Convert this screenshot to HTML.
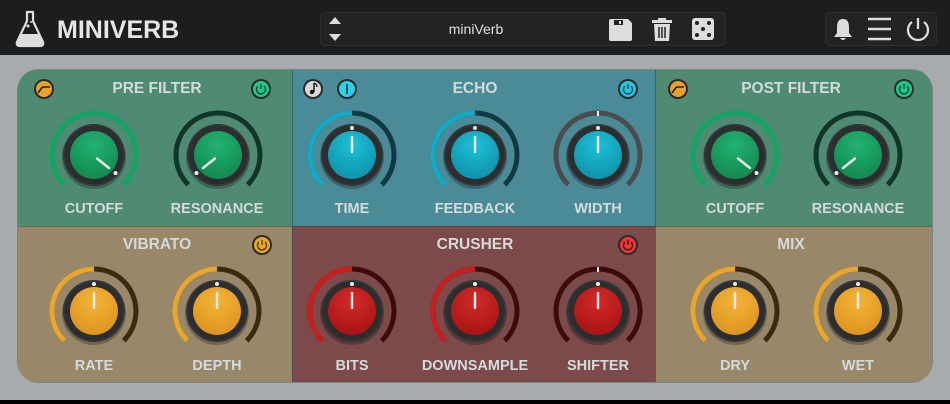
<!DOCTYPE html>
<html><head><meta charset="utf-8"><style>
html,body{margin:0;padding:0;width:950px;height:404px;overflow:hidden;background:#000;font-family:"Liberation Sans",sans-serif}
#hdr{position:absolute;left:0;top:0;width:950px;height:55px;background:#1c1d1f}
#bg{position:absolute;left:0;top:55px;width:950px;height:345px;background:#a7abae}
.t{position:absolute;font-weight:bold;color:#d3dbdb;font-size:14.5px;text-align:center;width:160px;margin-left:-80px}
.h{font-size:15.5px}
</style></head><body>
<div id="hdr"></div>
<div id="bg"></div>
<svg width="950" height="404" style="position:absolute;left:0;top:0">
<defs>
<radialGradient id="gG" cx="50%" cy="30%" r="70%"><stop offset="0" stop-color="#22b374"/><stop offset="1" stop-color="#13894f"/></radialGradient>
<radialGradient id="gT" cx="50%" cy="30%" r="70%"><stop offset="0" stop-color="#1ec0d8"/><stop offset="1" stop-color="#0e93ab"/></radialGradient>
<radialGradient id="gA" cx="50%" cy="30%" r="70%"><stop offset="0" stop-color="#f4b43a"/><stop offset="1" stop-color="#dc9420"/></radialGradient>
<radialGradient id="gR" cx="50%" cy="30%" r="70%"><stop offset="0" stop-color="#d42a2a"/><stop offset="1" stop-color="#a81414"/></radialGradient>
<g id="body"><circle r="32" fill="#000" opacity=".25" cy="2"/><circle r="31" fill="#2c2d2f"/><circle r="30" fill="none" stroke="#3a3b3d" stroke-width="1"/></g>
</defs>
<!-- header -->
<g fill="none" stroke="#ddd" stroke-width="2.2">
<path d="M26 12 h8 M27 12 v9 L17 42 q-1 4 3 4 h20 q4 0 3-4 L33 21 v-9"/>
</g>
<path d="M20 34 h20 l3 8 q1 3-3 3 h-20 q-4 0-3-3z" fill="#ddd"/>
<circle cx="28" cy="26" r="1.5" fill="#ddd"/><circle cx="31" cy="22" r="1" fill="#ddd"/>
<text x="57" y="38" font-family="Liberation Sans" font-weight="bold" font-size="25" fill="#e6e6e6">MINIVERB</text>
<rect x="320.5" y="12.5" width="405" height="33" rx="4" fill="#222325" stroke="#2e2f31"/>
<path d="M329 24 l6-7 l6 7z M329 34 l6 7 l6-7z" fill="#ddd"/>
<text x="476" y="34" text-anchor="middle" font-family="Liberation Sans" font-size="14" fill="#e0e0e0">miniVerb</text>
<path d="M611 19 h17 l4 4 v16 q0 2-2 2 h-19 q-2 0-2-2 v-18 q0-2 2-2z" fill="#ddd"/><rect x="614" y="20" width="9" height="5" fill="#222"/><rect x="619" y="21" width="2" height="3" fill="#ddd"/>
<path d="M652 20 h20 v3 h-20z M658 18 h8 v2 h-8z M654 24 h16 l-1 17 h-14z" fill="#ddd"/><path d="M659 27 v11 M662 27 v11 M665 27 v11" stroke="#222" stroke-width="1.5"/>
<rect x="692" y="18" width="22" height="22" rx="3" fill="#ddd"/>
<g fill="#222"><circle cx="697" cy="23" r="2"/><circle cx="709" cy="23" r="2"/><circle cx="703" cy="29" r="2"/><circle cx="697" cy="35" r="2"/><circle cx="709" cy="35" r="2"/></g>
<rect x="825.5" y="12.5" width="111" height="33" rx="4" fill="#222325" stroke="#2e2f31"/>
<path d="M843 19 q-6 0-6 8 v6 l-3 4 h18 l-3-4 v-6 q0-8-6-8z M840 38 q3 4 6 0z" fill="#ddd"/>
<path d="M868 19 h23 M868 29 h23 M868 39 h23" stroke="#ddd" stroke-width="2.4"/>
<path d="M912 22 a10 10 0 1 0 12 0 M918 18 v11" fill="none" stroke="#ddd" stroke-width="2.3"/>
<!-- panel -->
<rect x="17" y="69" width="916" height="314" rx="22" fill="#5f6a64" opacity=".6"/>
<path d="M40 70 H292 V226 H18 V92 Q18 70 40 70z" fill="#4f8a73"/>
<rect x="292" y="70" width="363" height="156" fill="#4b8b98"/>
<path d="M655 70 H910 Q932 70 932 92 V226 H655z" fill="#4f8a73"/>
<path d="M18 226 H292 V382 H40 Q18 382 18 360z" fill="#988769"/>
<rect x="292" y="226" width="363" height="156" fill="#7c4a4a"/>
<path d="M655 226 H932 V360 Q932 382 910 382 H655z" fill="#988769"/>
<path d="M292.5 70 V382 M655.5 70 V382" stroke="#2d4a48" stroke-width="1" opacity=".6"/>
<path d="M18 226.5 H932" stroke="#2d3a38" stroke-width="1" opacity=".4"/>
<!-- small buttons -->
<g><circle cx="44" cy="89" r="10" fill="#2a2a2a"/><circle cx="44" cy="89" r="8" fill="#e8a030"/><path d="M38 93 l3-4 q1-2 3-2 h6" fill="none" stroke="#222" stroke-width="1.6"/></g>
<g><circle cx="678" cy="89" r="10" fill="#2a2a2a"/><circle cx="678" cy="89" r="8" fill="#e8a030"/><path d="M672 93 l3-4 q1-2 3-2 h6" fill="none" stroke="#222" stroke-width="1.6"/></g>
<g><circle cx="261" cy="89" r="10" fill="#2a2a2a"/><circle cx="261" cy="89" r="8" fill="#1ec98a"/><path d="M258 86 a4.5 4.5 0 1 0 6 0 M261 84 v5" fill="none" stroke="#1b4a38" stroke-width="1.4"/></g>
<g><circle cx="904" cy="89" r="10" fill="#2a2a2a"/><circle cx="904" cy="89" r="8" fill="#1ec98a"/><path d="M901 86 a4.5 4.5 0 1 0 6 0 M904 84 v5" fill="none" stroke="#1b4a38" stroke-width="1.4"/></g>
<g><circle cx="628" cy="89" r="10" fill="#2a2a2a"/><circle cx="628" cy="89" r="8" fill="#25c8e0"/><path d="M625 86 a4.5 4.5 0 1 0 6 0 M628 84 v5" fill="none" stroke="#14505a" stroke-width="1.4"/></g>
<g><circle cx="262" cy="245" r="10" fill="#2a2a2a"/><circle cx="262" cy="245" r="8" fill="#e8a828"/><path d="M259 242 a4.5 4.5 0 1 0 6 0 M262 240 v5" fill="none" stroke="#5a3a08" stroke-width="1.4"/></g>
<g><circle cx="628" cy="245" r="10" fill="#2a2a2a"/><circle cx="628" cy="245" r="8" fill="#e83838"/><path d="M625 242 a4.5 4.5 0 1 0 6 0 M628 240 v5" fill="none" stroke="#5a1010" stroke-width="1.4"/></g>
<g><circle cx="313" cy="89" r="10" fill="#2a2a2a"/><circle cx="313" cy="89" r="8" fill="#d8d8d8"/><path d="M314 83 v9" stroke="#111" stroke-width="1.4"/><circle cx="312" cy="92" r="2.2" fill="#111"/><path d="M314 83 q3 1 3 4" fill="none" stroke="#111" stroke-width="1.2"/></g>
<g><circle cx="347" cy="89" r="10" fill="#2a2a2a"/><circle cx="347" cy="89" r="8" fill="#2ad0ec"/><path d="M347 84 v10" stroke="#0d3a44" stroke-width="1.8"/></g>

<g transform="translate(94,155)"><path d="M-29.7 29.7 A42 42 0 1 1 29.7 29.7" fill="none" stroke="#14a466" stroke-width="5"/><use href="#body"/><circle r="24" fill="url(#gG)"/><path d="M3 3.5 L15 13" stroke="#eee" stroke-width="2.4" stroke-linecap="round"/><circle cx="21.5" cy="18" r="2" fill="#eee"/></g>
<g transform="translate(218,155)"><path d="M-29.7 29.7 A42 42 0 1 1 29.7 29.7" fill="none" stroke="#12352a" stroke-width="5"/><use href="#body"/><circle r="24" fill="url(#gG)"/><path d="M-3 3.5 L-15 13" stroke="#eee" stroke-width="2.4" stroke-linecap="round"/><circle cx="-21.5" cy="18" r="2" fill="#eee"/></g>
<g transform="translate(735,155)"><path d="M-29.7 29.7 A42 42 0 1 1 29.7 29.7" fill="none" stroke="#14a466" stroke-width="5"/><use href="#body"/><circle r="24" fill="url(#gG)"/><path d="M3 3.5 L15 13" stroke="#eee" stroke-width="2.4" stroke-linecap="round"/><circle cx="21.5" cy="18" r="2" fill="#eee"/></g>
<g transform="translate(858,155)"><path d="M-29.7 29.7 A42 42 0 1 1 29.7 29.7" fill="none" stroke="#12352a" stroke-width="5"/><use href="#body"/><circle r="24" fill="url(#gG)"/><path d="M-3 3.5 L-15 13" stroke="#eee" stroke-width="2.4" stroke-linecap="round"/><circle cx="-21.5" cy="18" r="2" fill="#eee"/></g>
<g transform="translate(352,155)"><path d="M-29.7 29.7 A42 42 0 1 1 29.7 29.7" fill="none" stroke="#0f3a42" stroke-width="5"/><path d="M-29.7 29.7 A42 42 0 0 1 0 -42" fill="none" stroke="#14aac4" stroke-width="5"/><use href="#body"/><circle r="24" fill="url(#gT)"/><path d="M0 -3 V-18" stroke="#eee" stroke-width="2.4" stroke-linecap="round"/><circle cy="-27" r="2" fill="#eee"/></g>
<g transform="translate(475,155)"><path d="M-29.7 29.7 A42 42 0 1 1 29.7 29.7" fill="none" stroke="#0f3a42" stroke-width="5"/><path d="M-29.7 29.7 A42 42 0 0 1 0 -42" fill="none" stroke="#14aac4" stroke-width="5"/><use href="#body"/><circle r="24" fill="url(#gT)"/><path d="M0 -3 V-18" stroke="#eee" stroke-width="2.4" stroke-linecap="round"/><circle cy="-27" r="2" fill="#eee"/></g>
<g transform="translate(598,155)"><path d="M-29.7 29.7 A42 42 0 1 1 29.7 29.7" fill="none" stroke="#4a4c4e" stroke-width="5"/><path d="M0 -44 V-39" stroke="#eee" stroke-width="2"/><use href="#body"/><circle r="24" fill="url(#gT)"/><path d="M0 -3 V-18" stroke="#eee" stroke-width="2.4" stroke-linecap="round"/><circle cy="-27" r="2" fill="#eee"/></g>
<g transform="translate(94,311)"><path d="M-29.7 29.7 A42 42 0 1 1 29.7 29.7" fill="none" stroke="#3a2a10" stroke-width="5"/><path d="M-29.7 29.7 A42 42 0 0 1 0 -42" fill="none" stroke="#eaa62c" stroke-width="5"/><use href="#body"/><circle r="24" fill="url(#gA)"/><path d="M0 -3 V-18" stroke="#eee" stroke-width="2.4" stroke-linecap="round"/><circle cy="-27" r="2" fill="#eee"/></g>
<g transform="translate(217,311)"><path d="M-29.7 29.7 A42 42 0 1 1 29.7 29.7" fill="none" stroke="#3a2a10" stroke-width="5"/><path d="M-29.7 29.7 A42 42 0 0 1 0 -42" fill="none" stroke="#eaa62c" stroke-width="5"/><use href="#body"/><circle r="24" fill="url(#gA)"/><path d="M0 -3 V-18" stroke="#eee" stroke-width="2.4" stroke-linecap="round"/><circle cy="-27" r="2" fill="#eee"/></g>
<g transform="translate(352,311)"><path d="M-29.7 29.7 A42 42 0 1 1 29.7 29.7" fill="none" stroke="#3a0c0c" stroke-width="5"/><path d="M-29.7 29.7 A42 42 0 0 1 0 -42" fill="none" stroke="#c81e1e" stroke-width="5"/><use href="#body"/><circle r="24" fill="url(#gR)"/><path d="M0 -3 V-18" stroke="#eee" stroke-width="2.4" stroke-linecap="round"/><circle cy="-27" r="2" fill="#eee"/></g>
<g transform="translate(475,311)"><path d="M-29.7 29.7 A42 42 0 1 1 29.7 29.7" fill="none" stroke="#3a0c0c" stroke-width="5"/><path d="M-29.7 29.7 A42 42 0 0 1 0 -42" fill="none" stroke="#c81e1e" stroke-width="5"/><use href="#body"/><circle r="24" fill="url(#gR)"/><path d="M0 -3 V-18" stroke="#eee" stroke-width="2.4" stroke-linecap="round"/><circle cy="-27" r="2" fill="#eee"/></g>
<g transform="translate(598,311)"><path d="M-29.7 29.7 A42 42 0 1 1 29.7 29.7" fill="none" stroke="#3a0c0c" stroke-width="5"/><path d="M0 -44 V-39" stroke="#eee" stroke-width="2"/><use href="#body"/><circle r="24" fill="url(#gR)"/><path d="M0 -3 V-18" stroke="#eee" stroke-width="2.4" stroke-linecap="round"/><circle cy="-27" r="2" fill="#eee"/></g>
<g transform="translate(735,311)"><path d="M-29.7 29.7 A42 42 0 1 1 29.7 29.7" fill="none" stroke="#3a2a10" stroke-width="5"/><path d="M-29.7 29.7 A42 42 0 0 1 0 -42" fill="none" stroke="#eaa62c" stroke-width="5"/><use href="#body"/><circle r="24" fill="url(#gA)"/><path d="M0 -3 V-18" stroke="#eee" stroke-width="2.4" stroke-linecap="round"/><circle cy="-27" r="2" fill="#eee"/></g>
<g transform="translate(858,311)"><path d="M-29.7 29.7 A42 42 0 1 1 29.7 29.7" fill="none" stroke="#3a2a10" stroke-width="5"/><path d="M-29.7 29.7 A42 42 0 0 1 0 -42" fill="none" stroke="#eaa62c" stroke-width="5"/><use href="#body"/><circle r="24" fill="url(#gA)"/><path d="M0 -3 V-18" stroke="#eee" stroke-width="2.4" stroke-linecap="round"/><circle cy="-27" r="2" fill="#eee"/></g>
</svg>
<div class="t h" style="left:157px;top:80px">PRE FILTER</div>
<div class="t h" style="left:475px;top:80px">ECHO</div>
<div class="t h" style="left:791px;top:80px">POST FILTER</div>
<div class="t h" style="left:157px;top:236px">VIBRATO</div>
<div class="t h" style="left:475px;top:236px">CRUSHER</div>
<div class="t h" style="left:791px;top:236px">MIX</div>
<div class="t" style="left:94px;top:201px">CUTOFF</div>
<div class="t" style="left:217px;top:201px">RESONANCE</div>
<div class="t" style="left:352px;top:201px">TIME</div>
<div class="t" style="left:475px;top:201px">FEEDBACK</div>
<div class="t" style="left:598px;top:201px">WIDTH</div>
<div class="t" style="left:735px;top:201px">CUTOFF</div>
<div class="t" style="left:858px;top:201px">RESONANCE</div>
<div class="t" style="left:94px;top:358px">RATE</div>
<div class="t" style="left:217px;top:358px">DEPTH</div>
<div class="t" style="left:352px;top:358px">BITS</div>
<div class="t" style="left:475px;top:358px">DOWNSAMPLE</div>
<div class="t" style="left:598px;top:358px">SHIFTER</div>
<div class="t" style="left:735px;top:358px">DRY</div>
<div class="t" style="left:858px;top:358px">WET</div>
</body></html>
